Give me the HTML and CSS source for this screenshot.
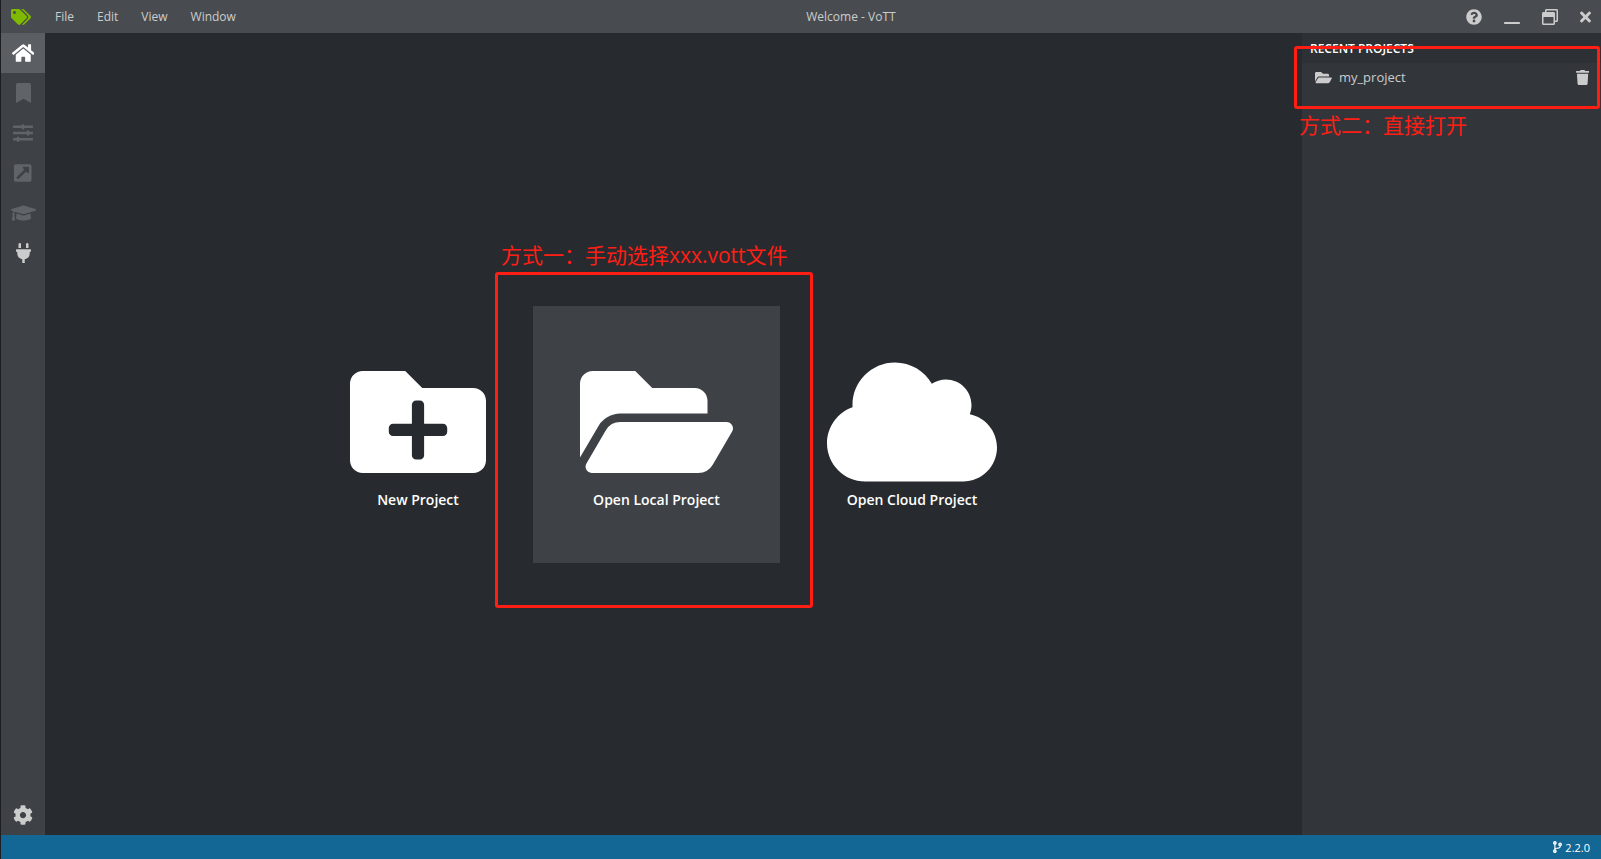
FILE: index.html
```html
<!DOCTYPE html>
<html lang="en">
<head>
<meta charset="utf-8">
<title>Welcome - VoTT</title>
<link rel="stylesheet" href="styles.css">
</head>
<body>
<div class="app">
  <header class="titlebar">
    <svg class="logo" viewBox="0 0 640 512" aria-hidden="true"><path d="M497.941 225.941L286.059 14.059A48 48 0 0 0 252.118 0H48C21.49 0 0 21.49 0 48v204.118a48 48 0 0 0 14.059 33.941l211.882 211.882c18.744 18.745 49.136 18.746 67.882 0l204.118-204.118c18.745-18.745 18.745-49.137 0-67.882zM112 160c-26.51 0-48-21.49-48-48s21.49-48 48-48 48 21.49 48 48-21.49 48-48 48zm513.941 133.823L421.823 497.941c-18.745 18.745-49.137 18.745-67.882 0l-.36-.36L527.64 323.522c16.999-16.999 26.36-39.6 26.36-63.64s-9.362-46.641-26.36-63.64L331.397 0h48.721a48 48 0 0 1 33.941 14.059l211.882 211.882c18.745 18.745 18.745 49.137 0 67.882z"/></svg>
    <nav class="menu">
      <button type="button">File</button>
      <button type="button">Edit</button>
      <button type="button">View</button>
      <button type="button">Window</button>
    </nav>
    <div class="title">Welcome - VoTT</div>
    <div class="window-buttons">
      <button type="button" aria-label="Help"><svg class="icon" viewBox="0 0 512 512"><path d="M504 256c0 136.997-111.043 248-248 248S8 392.997 8 256C8 119.083 119.043 8 256 8s248 111.083 248 248zM262.655 90c-54.497 0-89.255 22.957-116.549 63.758-3.536 5.286-2.353 12.415 2.715 16.258l34.699 26.31c5.205 3.947 12.621 3.008 16.665-2.122 17.864-22.658 30.113-35.797 57.303-35.797 20.429 0 45.698 13.148 45.698 32.958 0 14.976-12.363 22.667-32.534 33.976C247.128 238.528 216 254.941 216 296v4c0 6.627 5.373 12 12 12h56c6.627 0 12-5.373 12-12v-1.333c0-28.462 83.186-29.647 83.186-106.667 0-58.002-60.165-102-116.531-102zM256 338c-25.365 0-46 20.635-46 46 0 25.364 20.635 46 46 46s46-20.636 46-46c0-25.365-20.635-46-46-46z"/></svg></button>
      <button type="button" aria-label="Minimize"><svg class="icon" viewBox="0 0 512 512"><path d="M480 416H32c-18 0-32 14-32 32s14 32 32 32h448c18 0 32-14 32-32s-14-32-32-32z"/></svg></button>
      <button type="button" aria-label="Restore"><svg class="icon" viewBox="0 0 512 512"><path d="M464 0H144c-26.5 0-48 21.5-48 48v48H48c-26.5 0-48 21.5-48 48v320c0 26.5 21.5 48 48 48h320c26.5 0 48-21.5 48-48v-48h48c26.5 0 48-21.5 48-48V48c0-26.5-21.5-48-48-48zm-96 464H48V256h320v208zm96-96h-48V144c0-26.5-21.5-48-48-48H144V48h320v320z"/></svg></button>
      <button type="button" aria-label="Close"><svg class="icon" viewBox="0 0 352 512"><path d="M242.72 256l100.07-100.07c12.28-12.28 12.28-32.19 0-44.48l-22.24-22.24c-12.28-12.28-32.19-12.28-44.48 0L176 189.28 75.93 89.21c-12.28-12.28-32.19-12.28-44.48 0L9.21 111.45c-12.28 12.28-12.28 32.19 0 44.48L109.28 256 9.21 356.07c-12.28 12.28-12.28 32.19 0 44.48l22.24 22.24c12.28 12.28 32.2 12.28 44.48 0L176 322.72l100.07 100.07c12.28 12.28 32.2 12.28 44.48 0l22.24-22.24c12.28-12.28 12.28-32.19 0-44.48L242.72 256z"/></svg></button>
    </div>
  </header>

  <div class="body">
    <nav class="rail">
      <a class="rail-item active" href="#home" aria-label="Home"><svg viewBox="0 0 576 512"><path d="M280.37 148.26L96 300.11V464a16 16 0 0 0 16 16l112.06-.29a16 16 0 0 0 15.92-16V368a16 16 0 0 1 16-16h64a16 16 0 0 1 16 16v95.64a16 16 0 0 0 16 16.05L464 480a16 16 0 0 0 16-16V300L295.67 148.26a12.19 12.19 0 0 0-15.3 0zM571.6 251.47L488 182.56V44.05a12 12 0 0 0-12-12h-56a12 12 0 0 0-12 12v72.61L318.47 43a48 48 0 0 0-61 0L4.34 251.47a12 12 0 0 0-1.6 16.9l25.5 31A12 12 0 0 0 45.15 301l235.22-193.74a12.19 12.19 0 0 1 15.3 0L530.9 301a12 12 0 0 0 16.9-1.6l25.5-31a12 12 0 0 0-1.7-16.93z"/></svg></a>
      <a class="rail-item disabled" href="#edit" aria-label="Tags editor"><svg viewBox="0 0 384 512"><path d="M0 512V48C0 21.49 21.49 0 48 0h288c26.51 0 48 21.49 48 48v464L192 400 0 512z"/></svg></a>
      <a class="rail-item disabled" href="#settings" aria-label="Project settings"><svg viewBox="0 0 512 512"><path d="M496 384H160v-16c0-8.8-7.2-16-16-16h-32c-8.8 0-16 7.2-16 16v16H16c-8.8 0-16 7.2-16 16v32c0 8.8 7.2 16 16 16h80v16c0 8.8 7.2 16 16 16h32c8.8 0 16-7.2 16-16v-16h336c8.8 0 16-7.2 16-16v-32c0-8.8-7.2-16-16-16zm0-160h-80v-16c0-8.8-7.2-16-16-16h-32c-8.8 0-16 7.2-16 16v16H16c-8.8 0-16 7.2-16 16v32c0 8.8 7.2 16 16 16h336v16c0 8.8 7.2 16 16 16h32c8.8 0 16-7.2 16-16v-16h80c8.8 0 16-7.2 16-16v-32c0-8.8-7.2-16-16-16zm0-160H288V48c0-8.8-7.2-16-16-16h-32c-8.8 0-16 7.2-16 16v16H16C7.2 64 0 71.2 0 80v32c0 8.8 7.2 16 16 16h208v16c0 8.8 7.2 16 16 16h32c8.8 0 16-7.2 16-16v-16h208c8.8 0 16-7.2 16-16V80c0-8.8-7.2-16-16-16z"/></svg></a>
      <a class="rail-item disabled" href="#export" aria-label="Export"><svg viewBox="0 0 448 512"><path d="M448 80v352c0 26.51-21.49 48-48 48H48c-26.51 0-48-21.49-48-48V80c0-26.51 21.49-48 48-48h352c26.51 0 48 21.49 48 48zm-88 16H248.029c-21.313 0-32.08 25.861-16.971 40.971l31.984 31.987L67.515 364.485c-4.686 4.686-4.686 12.284 0 16.971l31.029 31.029c4.687 4.686 12.285 4.686 16.971 0l195.526-195.526 31.988 31.991C358.058 264.977 384 254.298 384 232V120c0-13.255-10.745-24-24-24z"/></svg></a>
      <a class="rail-item disabled" href="#learning" aria-label="Active learning"><svg viewBox="0 0 640 512"><path d="M622.34 153.2L343.4 67.5c-15.2-4.67-31.6-4.67-46.79 0L17.66 153.2c-23.54 7.23-23.54 38.36 0 45.59l48.63 14.94c-10.67 13.19-17.23 29.28-17.88 46.9C38.78 266.15 32 276.11 32 288c0 10.78 5.68 19.85 13.86 25.65L20.33 428.53C18.11 438.52 25.71 448 35.94 448h56.11c10.24 0 17.84-9.48 15.62-19.47L82.14 313.65C90.32 307.85 96 298.78 96 288c0-11.57-6.47-21.25-15.66-26.87.76-15.02 8.44-28.3 20.69-36.72L296.6 284.5c9.06 2.78 26.44 6.25 46.79 0l278.95-85.7c23.55-7.24 23.55-38.36 0-45.6zM352.79 315.09c-28.53 8.76-52.84 3.92-65.59 0l-145.02-44.55L128 384c0 35.35 85.96 64 192 64s192-28.65 192-64l-14.18-113.47-145.03 44.56z"/></svg></a>
      <a class="rail-item" href="#connections" aria-label="Connections"><svg viewBox="0 0 384 512"><path d="M320 32a32 32 0 0 0-64 0v96h64zm48 128H16a16 16 0 0 0-16 16v32a16 16 0 0 0 16 16h16v32a160.07 160.07 0 0 0 128 156.8V512h64v-99.2A160.07 160.07 0 0 0 352 256v-32h16a16 16 0 0 0 16-16v-32a16 16 0 0 0-16-16zM128 32a32 32 0 0 0-64 0v96h64z"/></svg></a>
      <a class="rail-item rail-bottom" href="#app-settings" aria-label="Application settings"><svg viewBox="0 0 512 512"><path d="M487.4 315.7l-42.6-24.6c4.3-23.2 4.3-47 0-70.2l42.6-24.6c4.9-2.8 7.1-8.6 5.5-14-11.1-35.6-30-67.8-54.7-94.6-3.8-4.1-10-5.1-14.8-2.3L380.8 110c-17.9-15.4-38.5-27.3-60.8-35.1V25.8c0-5.6-3.9-10.5-9.4-11.7-36.7-8.2-74.3-7.8-109.2 0-5.5 1.2-9.4 6.1-9.4 11.7V75c-22.2 7.9-42.8 19.8-60.8 35.1L88.7 85.5c-4.9-2.8-11-1.9-14.8 2.3-24.7 26.7-43.6 58.9-54.7 94.6-1.7 5.4.6 11.2 5.5 14L67.3 221c-4.3 23.2-4.3 47 0 70.2l-42.6 24.6c-4.9 2.8-7.1 8.6-5.5 14 11.1 35.6 30 67.8 54.7 94.6 3.8 4.1 10 5.1 14.8 2.3l42.6-24.6c17.9 15.4 38.5 27.3 60.8 35.1v49.2c0 5.6 3.9 10.5 9.4 11.7 36.7 8.2 74.3 7.8 109.2 0 5.5-1.2 9.4-6.1 9.4-11.7v-49.2c22.2-7.9 42.8-19.8 60.8-35.1l42.6 24.6c4.9 2.8 11 1.9 14.8-2.3 24.7-26.7 43.6-58.9 54.7-94.6 1.5-5.5-.7-11.3-5.6-14.1zM256 336c-44.1 0-80-35.9-80-80s35.9-80 80-80 80 35.9 80 80-35.9 80-80 80z"/></svg></a>
    </nav>

    <main class="start">
      <a class="tile" href="#new">
        <svg viewBox="0 0 512 512" aria-hidden="true"><path fill-rule="evenodd" d="M464 128H272l-64-64H48C21.49 64 0 85.49 0 112v288c0 26.51 21.49 48 48 48h416c26.51 0 48-21.49 48-48V176c0-26.51-21.49-48-48-48zM249 175h14a16 16 0 0 1 16 16v72h71a16 16 0 0 1 16 16v14a16 16 0 0 1-16 16h-71v72a16 16 0 0 1-16 16h-14a16 16 0 0 1-16-16v-72h-71a16 16 0 0 1-16-16v-14a16 16 0 0 1 16-16h71v-72a16 16 0 0 1 16-16z"/></svg>
        <span>New Project</span>
      </a>
      <div class="marked-tile">
        <a class="tile hovered" href="#open">
          <svg viewBox="0 0 576 512" aria-hidden="true"><path d="M572.694 292.093L500.27 416.248A63.997 63.997 0 0 1 444.989 448H45.025c-18.523 0-30.064-20.093-20.731-36.093l72.424-124.155A64 64 0 0 1 152 256h399.964c18.523 0 30.064 20.093 20.73 36.093zM152 224h328v-48c0-26.51-21.49-48-48-48H272l-64-64H48C21.49 64 0 85.49 0 112v278.046l69.077-118.418C86.214 242.25 117.989 224 152 224z"/></svg>
          <span>Open Local Project</span>
        </a>
        <div class="mark mark-tile"></div>
        <div class="note note-tile" lang="zh">方式一：手动选择xxx.vott文件</div>
      </div>
      <a class="tile" href="#cloud">
        <svg viewBox="0 0 640 512" aria-hidden="true"><path d="M537.6 226.6c4.1-10.7 6.4-22.4 6.4-34.6 0-53-43-96-96-96-19.7 0-38.1 6-53.3 16.2C367 64.2 315.3 32 256 32c-88.4 0-160 71.6-160 160 0 2.7.1 5.4.2 8.1C40.2 219.8 0 273.2 0 336c0 79.5 64.5 144 144 144h368c70.7 0 128-57.3 128-128 0-61.9-44-113.6-102.4-125.4z"/></svg>
        <span>Open Cloud Project</span>
      </a>
    </main>

    <aside class="recent">
      <h2>RECENT PROJECTS</h2>
      <div class="recent-row">
        <a href="#my_project"><svg class="icon" viewBox="0 0 576 512" aria-hidden="true"><path d="M572.694 292.093L500.27 416.248A63.997 63.997 0 0 1 444.989 448H45.025c-18.523 0-30.064-20.093-20.731-36.093l72.424-124.155A64 64 0 0 1 152 256h399.964c18.523 0 30.064 20.093 20.73 36.093zM152 224h328v-48c0-26.51-21.49-48-48-48H272l-64-64H48C21.49 64 0 85.49 0 112v278.046l69.077-118.418C86.214 242.25 117.989 224 152 224z"/></svg>my_project</a>
        <button type="button" aria-label="Delete my_project"><svg class="icon" viewBox="0 0 448 512"><path d="M432 32H312l-9.4-18.7A24 24 0 0 0 281.1 0H166.8a23.72 23.72 0 0 0-21.4 13.3L136 32H16A16 16 0 0 0 0 48v32a16 16 0 0 0 16 16h416a16 16 0 0 0 16-16V48a16 16 0 0 0-16-16zM53.2 467a48 48 0 0 0 47.9 45h245.8a48 48 0 0 0 47.9-45L416 128H32z"/></svg></button>
      </div>
      <div class="mark mark-recent"></div>
      <div class="note note-recent" lang="zh">方式二：直接打开</div>
    </aside>
  </div>

  <footer class="statusbar">
    <svg viewBox="0 0 384 512" aria-hidden="true"><path d="M384 144c0-44.2-35.8-80-80-80s-80 35.8-80 80c0 36.4 24.3 67.1 57.5 76.8-.6 16.1-4.2 28.5-11 36.9-15.4 19.2-49.3 22.4-85.2 25.7-28.2 2.6-57.4 5.4-81.3 16.9v-144c32.5-10.2 56-40.5 56-76.3 0-44.2-35.8-80-80-80S0 35.8 0 80c0 35.8 23.5 66.1 56 76.3v199.3C23.5 365.9 0 396.2 0 432c0 44.2 35.8 80 80 80s80-35.8 80-80c0-34-21.2-63.1-51.2-74.6 3.1-5.2 7.8-9.8 14.9-13.4 16.2-8.2 40.4-10.4 66.1-12.8 42.2-3.9 90-8.4 118.2-43.4 14-17.4 21.1-39.8 21.6-67.9 31.6-10.8 54.4-40.7 54.4-75.9zM80 64c8.800 0 16 7.200 16 16s-7.200 16-16 16-16-7.200-16-16 7.200-16 16-16zm0 384c-8.800 0-16-7.200-16-16s7.200-16 16-16 16 7.200 16 16-7.200 16-16 16zm224-320c8.800 0 16 7.200 16 16s-7.200 16-16 16-16-7.200-16-16 7.200-16 16-16z"/></svg>
    <span>2.2.0</span>
  </footer>
</div>
</body>
</html>
```
FILE: styles.css
```css
* { box-sizing: border-box; }

body {
  margin: 0;
  background: #1c1e21;
  color: #fff;
  font-family: "Open Sans", "Noto Sans CJK SC", sans-serif;
  font-size: 12px;
}

a { color: inherit; text-decoration: none; }

button {
  margin: 0;
  padding: 0;
  border: 0;
  background: none;
  color: inherit;
  font: inherit;
}

svg { display: block; fill: currentColor; }

.icon { height: 16px; }

.app {
  display: flex;
  flex-direction: column;
  min-height: 100vh;
  padding-left: 1px;
}

.titlebar {
  display: flex;
  align-items: center;
  height: 33px;
  padding: 0 10px;
  background: #484c50;
  color: #ccc;
}

.logo { height: 16px; fill: #7fba00; }

.menu { display: flex; gap: 23px; padding-left: 24px; }

.title { flex: 1; text-align: center; }

.window-buttons { display: flex; gap: 22px; }

.body { display: flex; flex: 1; }

.rail {
  display: flex;
  flex-direction: column;
  width: 44px;
  background: #3e4146;
  color: #ccc;
}

.rail-item {
  display: grid;
  place-items: center;
  height: 40px;
}

.rail-item svg { height: 20px; }
.active { background: #5b5e62; color: #fff; }
.disabled { color: #606468; }
.rail-bottom { margin-top: auto; }

.start {
  display: flex;
  flex: 1;
  align-items: center;
  justify-content: center;
  background: #272b2f;
}

.tile {
  display: flex;
  flex-direction: column;
  align-items: center;
  padding: 48px 47px 54px;
  font-size: 14px;
  font-weight: 600;
  line-height: 19px;
}

.tile svg { height: 136px; }
.hovered { background: #3e4146; }
.marked-tile { position: relative; }

.recent {
  position: relative;
  width: 299px;
  background: #32363b;
}

.recent h2 {
  margin: 0;
  padding: 2px 8px 0;
  background: #2d3035;
  font-size: 12px;
  font-weight: 600;
  line-height: 28px;
}

.recent-row {
  display: flex;
  align-items: center;
  justify-content: space-between;
  height: 28px;
  padding: 0 12px 0 13px;
  color: #ccc;
  font-size: 13px;
}

.recent-row a { display: flex; align-items: center; gap: 7px; }
.recent-row .icon { height: 15px; }

.mark {
  position: absolute;
  z-index: 1;
  border: 3px solid #ff1e14;
  border-radius: 3px;
  pointer-events: none;
}

.note {
  position: absolute;
  z-index: 1;
  color: #ff1e14;
  font-size: 21px;
  line-height: 30px;
  white-space: nowrap;
}

.mark-tile { inset: -34px -33px -45px -38px; }
.note-tile { top: -66px; left: -32px; }
.mark-recent { top: 13px; right: 1px; left: -8px; height: 63px; }
.note-recent { top: 77px; left: -3px; }

.statusbar {
  display: flex;
  align-items: center;
  justify-content: flex-end;
  gap: 3px;
  height: 24px;
  padding: 0 11px;
  background: #136794;
  font-size: 11px;
}

.statusbar svg { height: 12px; }
```
